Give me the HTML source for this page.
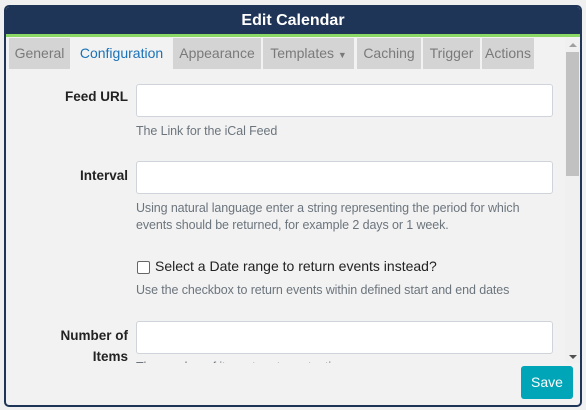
<!DOCTYPE html>
<html><head><style>
*{box-sizing:border-box;margin:0;padding:0}
body{width:586px;height:410px;background:#f0f0f0;font-family:"Liberation Sans",sans-serif;position:relative;overflow:hidden}
.dlg{position:absolute;left:4px;top:5px;width:578px;height:402px;border:2px solid #1f3557;border-radius:5px;background:#f2f2f2;overflow:hidden}
.hdr{position:absolute;left:0;top:0;right:0;height:27px;background:#1f3557;color:#fff;font-weight:bold;font-size:16px;text-align:center;line-height:27px}
.grn{position:absolute;left:0;right:0;top:27px;height:3px;background:#8cd867}
.tab{position:absolute;top:31px;height:31px;background:#d4d4d4;color:#7a7a7a;font-size:14px;line-height:31px;text-align:center}
.tab.a{background:#f2f2f2;color:#1a72b8}
.abs{position:absolute}
.lbl{position:absolute;font-weight:bold;font-size:13.5px;color:#222;text-align:right;right:437px}
.inp{position:absolute;left:130px;width:417px;height:33px;background:#fff;border:1px solid #cfd4da;border-radius:3px}
.help{position:absolute;left:130px;font-size:12.5px;color:#6c757d;line-height:17px;letter-spacing:-0.1px}
.sb{position:absolute;left:559px;top:31px;width:16px;height:325px;background:#f0f0f0}
</style></head><body>
<div class="dlg">
<div class="hdr">Edit Calendar</div>
<div class="grn"></div>
<div class="tab" style="left:3px;width:61px">General</div>
<div class="tab a" style="left:64px;width:103px">Configuration</div>
<div class="tab" style="left:167px;width:88px">Appearance</div>
<div class="tab" style="left:257px;width:91px">Templates <span style="font-size:9px">▼</span></div>
<div class="tab" style="left:351px;width:64px">Caching</div>
<div class="tab" style="left:417px;width:57px">Trigger</div>
<div class="tab" style="left:476px;width:52px">Actions</div>
<div style="position:absolute;left:0;top:62px;width:559px;height:294px;overflow:hidden">
<div class="lbl" style="top:20px">Feed URL</div>
<div class="inp" style="top:15px"></div>
<div class="help" style="top:54px">The Link for the iCal Feed</div>
<div class="lbl" style="top:99px">Interval</div>
<div class="inp" style="top:92px"></div>
<div class="help" style="top:131px">Using natural language enter a string representing the period for which<br>events should be returned, for example 2 days or 1 week.</div>
<div class="abs" style="left:131px;top:192px;width:13px;height:13px;border:1px solid #666;border-radius:2px;background:#fff"></div>
<div class="abs" style="left:149px;top:189px;font-size:14px;color:#222">Select a Date range to return events instead?</div>
<div class="help" style="top:213px">Use the checkbox to return events within defined start and end dates</div>
<div class="lbl" style="top:256px;line-height:21px">Number of<br>Items</div>
<div class="inp" style="top:252px"></div>
<div class="help" style="top:290px">The number of items to return at a time</div>
</div>
<div class="sb"><div style="position:absolute;left:1px;top:14px;width:13px;height:124px;background:#c1c1c1"></div>
<div style="position:absolute;left:4px;top:5px;border:4px solid transparent;border-bottom:4px solid #a0a0a0;border-top:0"></div>
<div style="position:absolute;left:4px;bottom:4px;border:4px solid transparent;border-top:4px solid #505050;border-bottom:0"></div></div>
<div class="abs" style="left:515px;top:359px;width:52px;height:33px;background:#00a5b8;border-radius:3px;color:#fff;font-size:14px;text-align:center;line-height:33px">Save</div>
</div>
</body></html>
